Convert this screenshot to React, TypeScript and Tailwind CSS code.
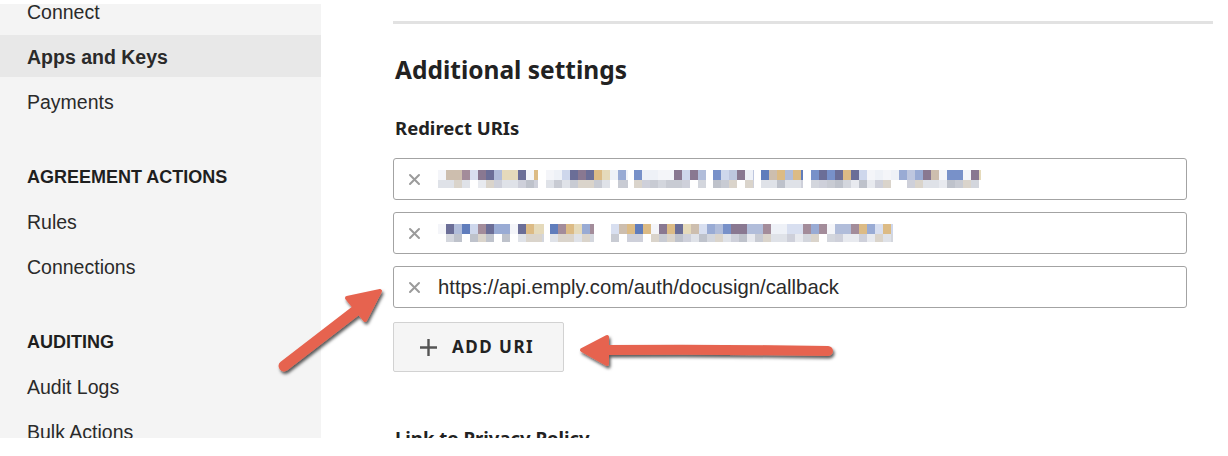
import React from "react";

// deterministic pseudo-random for the pixelated (redacted) URLs
function rng(seed: number) {
  let s = seed;
  return () => {
    s = (s * 16807) % 2147483647;
    return (s - 1) / 2147483646;
  };
}

const PAL_TOP = ["#b7c1dc", "#8fa3d0", "#6a86c4", "#c9d3ea", "#e3d6b4", "#d9b478", "#7d6a86", "#5b5f8c", "#a9b6d6", "#d4dcef", "#c8b7a6", "#9a8090", "#edf0f7", "#4f6fb5"];
const PAL_BOT = ["#cfd2da", "#c3c6cf", "#dcdfe6", "#b8bcc6", "#d6d0c6", "#e6e8ee", "#c9ccd6"];

function Mosaic({ segments, seed }: { segments: [number, number][]; seed: number }) {
  const r = rng(seed);
  const start = segments[0][0];
  const end = segments[segments.length - 1][1];
  const cells: React.ReactNode[] = [];
  const pick = (p: string[]) => p[Math.floor(r() * p.length)];
  segments.forEach(([a, b], si) => {
    for (let x = a; x < b; x += 8) {
      const w = Math.min(8, b - x);
      cells.push(<rect key={`${si}-${x}-t`} x={x - start} y={0} width={w} height={10} fill={r() > 0.08 ? pick(PAL_TOP) : "#f3f5f9"} />);
      if (r() > 0.12) cells.push(<rect key={`${si}-${x}-b`} x={x - start} y={10} width={w} height={8} fill={pick(PAL_BOT)} />);
    }
  });
  return (
    <svg width={end - start} height={18} className="block opacity-90">
      {cells}
    </svg>
  );
}

function XIcon() {
  return (
    <svg width="13" height="13" viewBox="0 0 13 13" className="shrink-0">
      <path d="M2 2 L11 11 M11 2 L2 11" stroke="#9b9b9b" strokeWidth="2" strokeLinecap="round" />
    </svg>
  );
}

function UriField({ children }: { children: React.ReactNode }) {
  return (
    <div className="flex h-[42px] items-center gap-[17px] rounded-[3px] border border-[#a3a3a3] bg-white pl-[14px]">
      <XIcon />
      {children}
    </div>
  );
}

const navItem = "flex h-[42px] items-center pl-[27px] pt-[4px] text-[19.5px] text-[#2a2a2a]";
const navHead = "mt-[30px] flex h-[42px] items-center pl-[27px] pt-[3px] text-[18px] font-bold text-[#1f1f1f]";

export default function App() {
  return (
    <div className="relative h-[456px] w-[1228px] overflow-hidden bg-white font-['Liberation_Sans',Arial,sans-serif]">
      <div className="flex h-[438px] overflow-hidden pt-[4px]">
        <aside className="w-[321px] shrink-0 bg-[#f4f4f4]">
          <nav className="-mt-[14px] flex flex-col gap-[3px]">
            <a className={navItem}>Connect</a>
            <a className={`${navItem} bg-[#e8e8e8] font-bold`}>Apps and Keys</a>
            <a className={navItem}>Payments</a>
            <div className={navHead}>AGREEMENT ACTIONS</div>
            <a className={navItem}>Rules</a>
            <a className={navItem}>Connections</a>
            <div className={navHead}>AUDITING</div>
            <a className={navItem}>Audit Logs</a>
            <a className={navItem}>Bulk Actions</a>
          </nav>
        </aside>

        <main className="flex-1 pl-[72px] pr-[15px]">
          <div className="mt-[17px] h-[3px] bg-[#e2e2e2]" />
          <h2 className="mt-[30px] pl-[2px] font-['Noto_Sans',sans-serif] text-[24.5px] font-bold leading-[32px] text-[#222]">
            Additional settings
          </h2>
          <h3 className="mt-[30px] pl-[2px] font-['Noto_Sans',sans-serif] text-[18.5px] font-bold leading-[24px] text-[#222]">
            Redirect URIs
          </h3>

          <div className="mt-[18px] mr-[26px] flex flex-col gap-[12px]">
            <UriField>
              <Mosaic
                seed={7}
                segments={[
                  [437, 537],
                  [545, 627],
                  [633, 705],
                  [712, 753],
                  [760, 802],
                  [810, 980],
                ]}
              />
            </UriField>
            <UriField>
              <Mosaic
                seed={23}
                segments={[
                  [437, 543],
                  [549, 593],
                  [610, 892],
                ]}
              />
            </UriField>
            <UriField>
              <span className="text-[20.3px] text-[#2b2b2b]">https://api.emply.com/auth/docusign/callback</span>
            </UriField>
          </div>

          <button className="mt-[14px] flex h-[50px] w-[171px] items-center gap-[14px] rounded-[2px] border border-[#d2d2d2] bg-[#f5f5f5] pl-[25px]">
            <svg width="19" height="19" viewBox="0 0 19 19">
              <path d="M9.5 1 V18 M1 9.5 H18" stroke="#555" strokeWidth="2.4" />
            </svg>
            <span className="font-['Noto_Sans',sans-serif] text-[17px] font-bold tracking-[1.5px] text-[#222]">
              ADD URI
            </span>
          </button>

          <h3 className="mt-[54px] pl-[2px] font-['Noto_Sans',sans-serif] text-[18.5px] font-bold leading-[24px] text-[#222]">
            Link to Privacy Policy
          </h3>
        </main>
      </div>

      {/* annotation arrows */}
      <svg className="pointer-events-none absolute left-0 top-0" width="1228" height="456">
        <defs>
          <filter id="sh" x="-20%" y="-20%" width="140%" height="140%">
            <feDropShadow dx="1.5" dy="2.5" stdDeviation="1.6" floodColor="#000" floodOpacity="0.65" />
          </filter>
        </defs>
        <g filter="url(#sh)" fill="#e66450" stroke="#e66450" strokeLinecap="round" strokeLinejoin="round">
          <path d="M284 366 L358 309" strokeWidth="11" fill="none" />
          <path d="M380 291 L347 298 L365 320 Z" strokeWidth="4" />
          <path d="M606 350 Q720 349 828 351" strokeWidth="10" fill="none" />
          <path d="M582 350 L607 337 L607 364 Z" strokeWidth="4" />
        </g>
      </svg>
    </div>
  );
}
